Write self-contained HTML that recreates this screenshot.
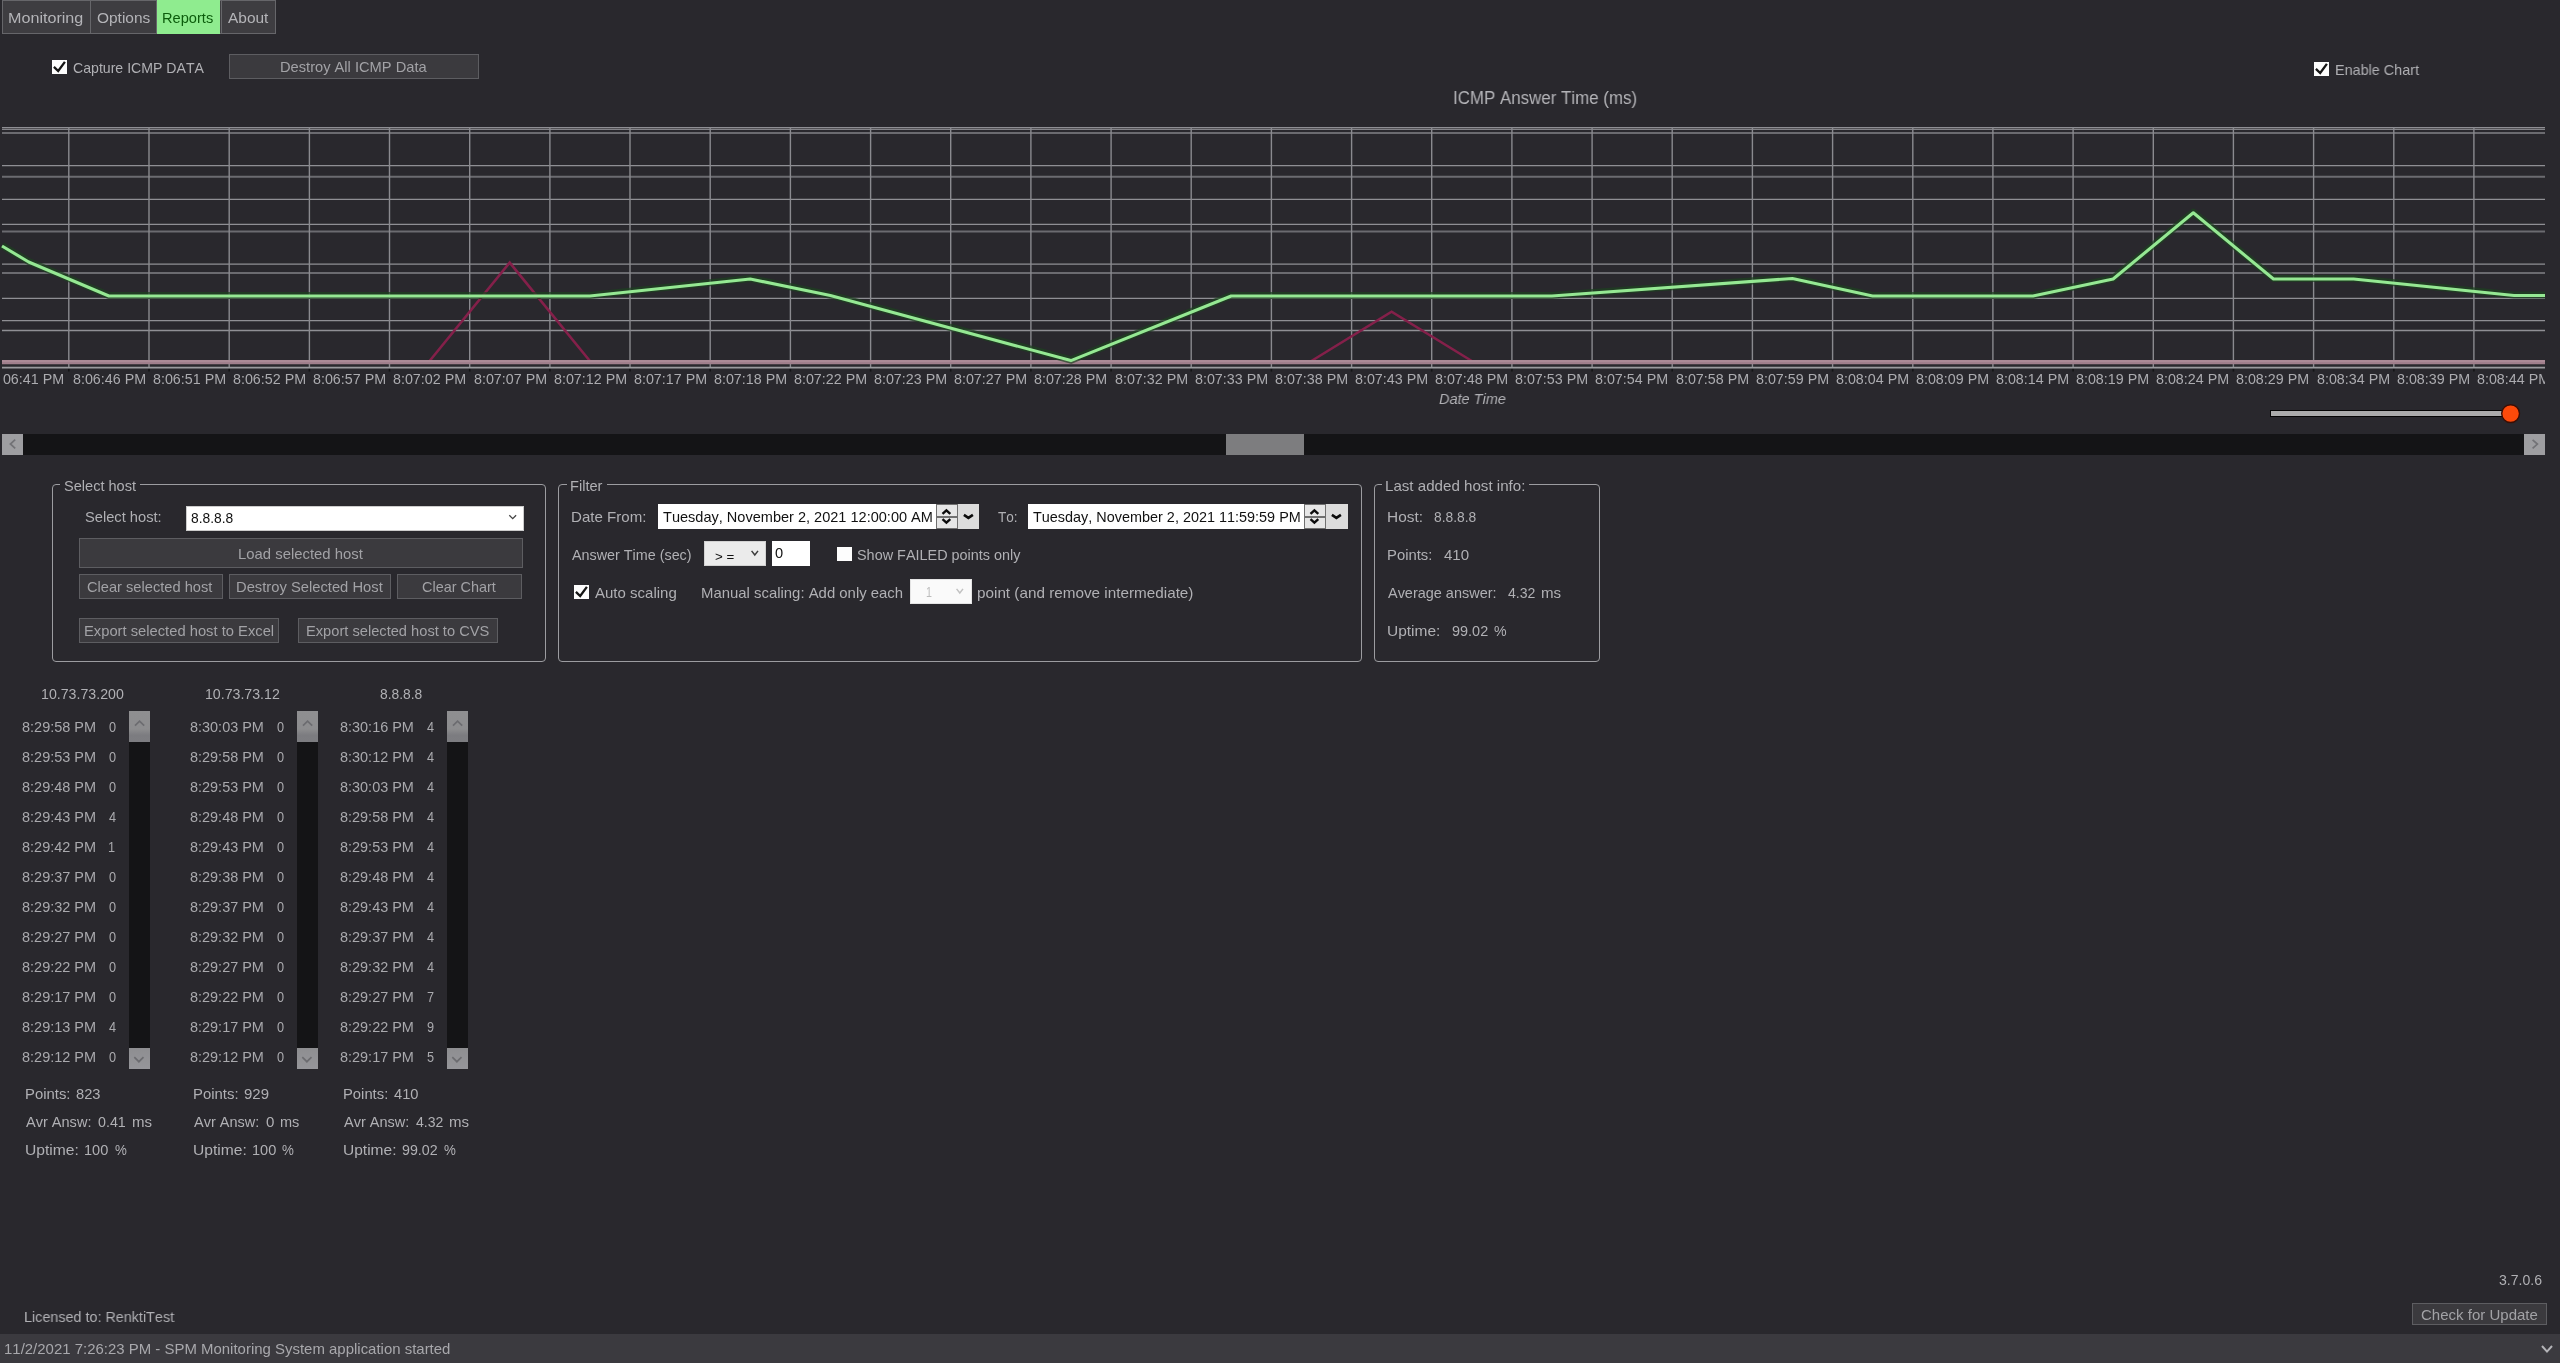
<!DOCTYPE html>
<html><head><meta charset="utf-8"><title>SPM Monitoring System</title>
<style>
html,body{margin:0;padding:0;}
body{width:2560px;height:1363px;overflow:hidden;background:#29282d;font-family:"Liberation Sans",sans-serif;position:relative;}
#w{position:absolute;left:0;top:0;width:2560px;height:1363px;will-change:transform;}
.t{position:absolute;white-space:pre;display:block;transform-origin:0 0;font-kerning:none;font-variant-ligatures:none;}
.r{position:absolute;box-sizing:content-box;}
</style></head><body>
<div id="w">
<div class="r" style="left:2px;top:0px;width:274px;height:34px;background:#3e3d41;border:1px solid #66666a;box-sizing:border-box;"></div>
<div class="r" style="left:89.5px;top:0px;width:1.5px;height:34px;background:#66666a;"></div>
<div class="r" style="left:156px;top:0px;width:1.5px;height:34px;background:#66666a;"></div>
<div class="r" style="left:220.5px;top:0px;width:1.5px;height:34px;background:#66666a;"></div>
<div class="r" style="left:157px;top:0px;width:63.4px;height:33.6px;background:#8fec8f;"></div>
<span class="t" style="left:8.28px;top:7.00px;font-size:14.4px;line-height:22px;color:#b4b4b8;transform:scaleX(1.1209);">Monitoring</span>
<span class="t" style="left:96.57px;top:7.00px;font-size:14.4px;line-height:22px;color:#b4b4b8;transform:scaleX(1.0738);">Options</span>
<span class="t" style="left:162.30px;top:7.00px;font-size:14.4px;line-height:22px;color:#0c5c0c;transform:scaleX(1.0160);">Reports</span>
<span class="t" style="left:228.27px;top:7.00px;font-size:14.4px;line-height:22px;color:#b4b4b8;transform:scaleX(1.0747);">About</span>
<div class="r" style="left:51.7px;top:60px;width:15px;height:14px;background:#fdfdfd;overflow:hidden;"><svg width="14" height="14" viewBox="0 0 14 14" style="position:absolute;left:0;top:0"><path d="M1.9 6.9 L6.2 11 L12.9 1.9" fill="none" stroke="#151515" stroke-width="2.3"/></svg></div>
<span class="t" style="left:72.58px;top:57.00px;font-size:14.6px;line-height:22px;color:#b0b0b4;transform:scaleX(0.9672);">Capture ICMP DATA</span>
<div class="r" style="left:229px;top:54px;width:250px;height:25px;background:#3b3a3e;border:1px solid #5d5d61;box-sizing:border-box;"></div>
<span class="t" style="left:280.30px;top:56.00px;font-size:14.6px;line-height:22px;color:#a2a2a6;transform:scaleX(1.0046);">Destroy All ICMP Data</span>
<div class="r" style="left:2313.7px;top:62px;width:15px;height:14px;background:#fdfdfd;overflow:hidden;"><svg width="14" height="14" viewBox="0 0 14 14" style="position:absolute;left:0;top:0"><path d="M1.9 6.9 L6.2 11 L12.9 1.9" fill="none" stroke="#151515" stroke-width="2.3"/></svg></div>
<span class="t" style="left:2334.92px;top:59.00px;font-size:14.6px;line-height:22px;color:#b0b0b4;transform:scaleX(0.9855);">Enable Chart</span>
<span class="t" style="left:1453.24px;top:84.50px;font-size:18px;line-height:27px;color:#b4b4b8;transform:scaleX(0.9393);">ICMP Answer Time (ms)</span>
<svg class="r" style="left:0;top:120px" width="2560" height="260" viewBox="0 120 2560 260"><g fill="none"><path d="M2 127.6H2545" stroke="#8f8f94" stroke-width="1.3"/><path d="M2 129.45H2545" stroke="#838388" stroke-width="1.2"/><path d="M2 133.05H2545" stroke="#6b6b70" stroke-width="2.0"/><path d="M2 165.6H2545" stroke="#8f8f94" stroke-width="1.3"/><path d="M2 176.8H2545" stroke="#6b6b70" stroke-width="2.0"/><path d="M2 199.4H2545" stroke="#8f8f94" stroke-width="1.3"/><path d="M2 224.3H2545" stroke="#8f8f94" stroke-width="1.3"/><path d="M2 231.6H2545" stroke="#6b6b70" stroke-width="2.0"/><path d="M2 264.2H2545" stroke="#8f8f94" stroke-width="1.3"/><path d="M2 273.0H2545" stroke="#6b6b70" stroke-width="2.0"/><path d="M2 298.3H2545" stroke="#8f8f94" stroke-width="1.3"/><path d="M2 320.6H2545" stroke="#8f8f94" stroke-width="1.3"/><path d="M2 330.5H2545" stroke="#8f8f94" stroke-width="1.3"/></g><g stroke="#8a8a8f" stroke-width="1.4" fill="none"><path d="M68.8 127.2V368"/><path d="M149.0 127.2V368"/><path d="M229.2 127.2V368"/><path d="M309.4 127.2V368"/><path d="M389.5 127.2V368"/><path d="M469.7 127.2V368"/><path d="M549.9 127.2V368"/><path d="M630.0 127.2V368"/><path d="M710.2 127.2V368"/><path d="M790.4 127.2V368"/><path d="M870.6 127.2V368"/><path d="M950.7 127.2V368"/><path d="M1030.9 127.2V368"/><path d="M1111.1 127.2V368"/><path d="M1191.2 127.2V368"/><path d="M1271.4 127.2V368"/><path d="M1351.6 127.2V368"/><path d="M1431.7 127.2V368"/><path d="M1511.9 127.2V368"/><path d="M1592.1 127.2V368"/><path d="M1672.2 127.2V368"/><path d="M1752.4 127.2V368"/><path d="M1832.6 127.2V368"/><path d="M1912.8 127.2V368"/><path d="M1992.9 127.2V368"/><path d="M2073.1 127.2V368"/><path d="M2153.3 127.2V368"/><path d="M2233.4 127.2V368"/><path d="M2313.6 127.2V368"/><path d="M2393.8 127.2V368"/><path d="M2473.9 127.2V368"/></g><g stroke="#141416" stroke-width="1.6" fill="none"><path d="M68.8 368.6V371.6"/><path d="M149.0 368.6V371.6"/><path d="M229.2 368.6V371.6"/><path d="M309.4 368.6V371.6"/><path d="M389.5 368.6V371.6"/><path d="M469.7 368.6V371.6"/><path d="M549.9 368.6V371.6"/><path d="M630.0 368.6V371.6"/><path d="M710.2 368.6V371.6"/><path d="M790.4 368.6V371.6"/><path d="M870.6 368.6V371.6"/><path d="M950.7 368.6V371.6"/><path d="M1030.9 368.6V371.6"/><path d="M1111.1 368.6V371.6"/><path d="M1191.2 368.6V371.6"/><path d="M1271.4 368.6V371.6"/><path d="M1351.6 368.6V371.6"/><path d="M1431.7 368.6V371.6"/><path d="M1511.9 368.6V371.6"/><path d="M1592.1 368.6V371.6"/><path d="M1672.2 368.6V371.6"/><path d="M1752.4 368.6V371.6"/><path d="M1832.6 368.6V371.6"/><path d="M1912.8 368.6V371.6"/><path d="M1992.9 368.6V371.6"/><path d="M2073.1 368.6V371.6"/><path d="M2153.3 368.6V371.6"/><path d="M2233.4 368.6V371.6"/><path d="M2313.6 368.6V371.6"/><path d="M2393.8 368.6V371.6"/><path d="M2473.9 368.6V371.6"/></g><path d="M429.6 361.0 L509.7 262.6 L589.9 361.0" stroke="#84204a" stroke-width="2.6" fill="none" stroke-linejoin="miter"/><path d="M1311.4 361.0 L1391.6 311.7 L1471.8 361.0" stroke="#84204a" stroke-width="2.6" fill="none"/><path d="M2 361H2545" stroke="#ab8a96" stroke-width="2.2" fill="none"/><path d="M2 363.1H2545" stroke="#a07f8c" stroke-width="2.2" fill="none"/><path d="M2 367.6H2545" stroke="#9a9a9e" stroke-width="1.6" fill="none"/><path d="M2.0 246.0 L28.7 262.0 L108.9 296.0 L589.9 296.0 L750.2 279.0 L830.4 295.6 L1070.9 360.6 L1231.2 296.0 L1551.9 296.0 L1792.4 278.5 L1872.6 296.0 L2033.0 296.0 L2113.1 279.0 L2193.3 212.8 L2273.5 279.0 L2353.6 279.0 L2514.0 295.5 L2545.0 295.5" stroke="#1c4220" stroke-opacity="0.7" stroke-width="7.2" fill="none" stroke-linejoin="round" transform="translate(0,-0.5)"/><path d="M2.0 246.0 L28.7 262.0 L108.9 296.0 L589.9 296.0 L750.2 279.0 L830.4 295.6 L1070.9 360.6 L1231.2 296.0 L1551.9 296.0 L1792.4 278.5 L1872.6 296.0 L2033.0 296.0 L2113.1 279.0 L2193.3 212.8 L2273.5 279.0 L2353.6 279.0 L2514.0 295.5 L2545.0 295.5" stroke="#95e893" stroke-width="3.1" fill="none" stroke-linejoin="round"/></svg>
<div class="r" style="left:2.6px;top:369px;width:2542.4px;height:26px;overflow:hidden">
<span class="t" style="left:-11.80px;top:-1.00px;font-size:14.8px;line-height:22px;color:#ababaf;transform:scaleX(0.9657);">8:06:41 PM</span>
<span class="t" style="left:70.33px;top:-1.00px;font-size:14.8px;line-height:22px;color:#ababaf;transform:scaleX(0.9657);">8:06:46 PM</span>
<span class="t" style="left:150.46px;top:-1.00px;font-size:14.8px;line-height:22px;color:#ababaf;transform:scaleX(0.9657);">8:06:51 PM</span>
<span class="t" style="left:230.59px;top:-1.00px;font-size:14.8px;line-height:22px;color:#ababaf;transform:scaleX(0.9657);">8:06:52 PM</span>
<span class="t" style="left:310.72px;top:-1.00px;font-size:14.8px;line-height:22px;color:#ababaf;transform:scaleX(0.9657);">8:06:57 PM</span>
<span class="t" style="left:390.85px;top:-1.00px;font-size:14.8px;line-height:22px;color:#ababaf;transform:scaleX(0.9657);">8:07:02 PM</span>
<span class="t" style="left:470.98px;top:-1.00px;font-size:14.8px;line-height:22px;color:#ababaf;transform:scaleX(0.9657);">8:07:07 PM</span>
<span class="t" style="left:551.11px;top:-1.00px;font-size:14.8px;line-height:22px;color:#ababaf;transform:scaleX(0.9657);">8:07:12 PM</span>
<span class="t" style="left:631.24px;top:-1.00px;font-size:14.8px;line-height:22px;color:#ababaf;transform:scaleX(0.9657);">8:07:17 PM</span>
<span class="t" style="left:711.37px;top:-1.00px;font-size:14.8px;line-height:22px;color:#ababaf;transform:scaleX(0.9657);">8:07:18 PM</span>
<span class="t" style="left:791.50px;top:-1.00px;font-size:14.8px;line-height:22px;color:#ababaf;transform:scaleX(0.9657);">8:07:22 PM</span>
<span class="t" style="left:871.63px;top:-1.00px;font-size:14.8px;line-height:22px;color:#ababaf;transform:scaleX(0.9657);">8:07:23 PM</span>
<span class="t" style="left:951.76px;top:-1.00px;font-size:14.8px;line-height:22px;color:#ababaf;transform:scaleX(0.9657);">8:07:27 PM</span>
<span class="t" style="left:1031.89px;top:-1.00px;font-size:14.8px;line-height:22px;color:#ababaf;transform:scaleX(0.9657);">8:07:28 PM</span>
<span class="t" style="left:1112.02px;top:-1.00px;font-size:14.8px;line-height:22px;color:#ababaf;transform:scaleX(0.9657);">8:07:32 PM</span>
<span class="t" style="left:1192.15px;top:-1.00px;font-size:14.8px;line-height:22px;color:#ababaf;transform:scaleX(0.9657);">8:07:33 PM</span>
<span class="t" style="left:1272.28px;top:-1.00px;font-size:14.8px;line-height:22px;color:#ababaf;transform:scaleX(0.9657);">8:07:38 PM</span>
<span class="t" style="left:1352.41px;top:-1.00px;font-size:14.8px;line-height:22px;color:#ababaf;transform:scaleX(0.9657);">8:07:43 PM</span>
<span class="t" style="left:1432.54px;top:-1.00px;font-size:14.8px;line-height:22px;color:#ababaf;transform:scaleX(0.9657);">8:07:48 PM</span>
<span class="t" style="left:1512.67px;top:-1.00px;font-size:14.8px;line-height:22px;color:#ababaf;transform:scaleX(0.9657);">8:07:53 PM</span>
<span class="t" style="left:1592.80px;top:-1.00px;font-size:14.8px;line-height:22px;color:#ababaf;transform:scaleX(0.9657);">8:07:54 PM</span>
<span class="t" style="left:1672.93px;top:-1.00px;font-size:14.8px;line-height:22px;color:#ababaf;transform:scaleX(0.9657);">8:07:58 PM</span>
<span class="t" style="left:1753.06px;top:-1.00px;font-size:14.8px;line-height:22px;color:#ababaf;transform:scaleX(0.9657);">8:07:59 PM</span>
<span class="t" style="left:1833.19px;top:-1.00px;font-size:14.8px;line-height:22px;color:#ababaf;transform:scaleX(0.9657);">8:08:04 PM</span>
<span class="t" style="left:1913.32px;top:-1.00px;font-size:14.8px;line-height:22px;color:#ababaf;transform:scaleX(0.9657);">8:08:09 PM</span>
<span class="t" style="left:1993.45px;top:-1.00px;font-size:14.8px;line-height:22px;color:#ababaf;transform:scaleX(0.9657);">8:08:14 PM</span>
<span class="t" style="left:2073.58px;top:-1.00px;font-size:14.8px;line-height:22px;color:#ababaf;transform:scaleX(0.9657);">8:08:19 PM</span>
<span class="t" style="left:2153.71px;top:-1.00px;font-size:14.8px;line-height:22px;color:#ababaf;transform:scaleX(0.9657);">8:08:24 PM</span>
<span class="t" style="left:2233.84px;top:-1.00px;font-size:14.8px;line-height:22px;color:#ababaf;transform:scaleX(0.9657);">8:08:29 PM</span>
<span class="t" style="left:2313.97px;top:-1.00px;font-size:14.8px;line-height:22px;color:#ababaf;transform:scaleX(0.9657);">8:08:34 PM</span>
<span class="t" style="left:2394.10px;top:-1.00px;font-size:14.8px;line-height:22px;color:#ababaf;transform:scaleX(0.9657);">8:08:39 PM</span>
<span class="t" style="left:2474.23px;top:-1.00px;font-size:14.8px;line-height:22px;color:#ababaf;transform:scaleX(0.9657);">8:08:44 PM</span>
</div>
<span class="t" style="left:1438.55px;top:387.00px;font-size:15.5px;line-height:23px;color:#b0b0b4;transform:scaleX(0.9370);font-style:italic;">Date Time</span>
<div class="r" style="left:2270px;top:410px;width:236px;height:7px;background:#ababab;border:1px solid #050505;box-sizing:border-box;"></div>
<svg class="r" style="left:2498px;top:401px" width="26" height="26"><circle cx="12.6" cy="12.6" r="8.9" fill="#fd4a0a" stroke="#3a0e05" stroke-width="1.4"/></svg>
<div class="r" style="left:2px;top:434px;width:2543px;height:21px;background:#141416;"></div>
<div class="r" style="left:2px;top:434px;width:21px;height:21px;background:#9e9ea1;"><svg width="21" height="21" style="position:absolute;left:0;top:0"><path d="M13.2 5.7L8.4 10L13.2 14.3" stroke="#727276" stroke-width="1.7" fill="none"/></svg></div>
<div class="r" style="left:2524px;top:434px;width:21px;height:21px;background:#9e9ea1;"><svg width="21" height="21" style="position:absolute;left:0;top:0"><path d="M8.6 5.8L13.4 10.1L8.6 14.4" stroke="#727276" stroke-width="1.7" fill="none"/></svg></div>
<div class="r" style="left:1226px;top:434px;width:78px;height:21px;background:#7d7d7f;"></div>
<div class="r" style="left:52px;top:484px;width:494px;height:178px;border:1px solid #9c9ca0;border-radius:4px;box-sizing:border-box;"></div>
<div class="r" style="left:60.2px;top:482px;width:80.3px;height:5px;background:#29282d;"></div>
<span class="t" style="left:63.54px;top:475.00px;font-size:14.6px;line-height:22px;color:#b0b0b4;transform:scaleX(0.9978);">Select host</span>
<div class="r" style="left:558px;top:484px;width:804px;height:178px;border:1px solid #9c9ca0;border-radius:4px;box-sizing:border-box;"></div>
<div class="r" style="left:566.7px;top:482px;width:40.0px;height:5px;background:#29282d;"></div>
<span class="t" style="left:569.50px;top:475.00px;font-size:14.6px;line-height:22px;color:#b0b0b4;transform:scaleX(0.9999);">Filter</span>
<div class="r" style="left:1374px;top:484px;width:226px;height:178px;border:1px solid #9c9ca0;border-radius:4px;box-sizing:border-box;"></div>
<div class="r" style="left:1382.3px;top:482px;width:146.79999999999995px;height:5px;background:#29282d;"></div>
<span class="t" style="left:1385.06px;top:475.00px;font-size:14.6px;line-height:22px;color:#b0b0b4;transform:scaleX(1.0359);">Last added host info:</span>
<span class="t" style="left:84.63px;top:506.00px;font-size:14.6px;line-height:22px;color:#b0b0b4;transform:scaleX(1.0055);">Select host:</span>
<div class="r" style="left:186px;top:506px;width:338px;height:24.5px;background:#fff;border:1px solid #ccc;box-sizing:border-box;"></div>
<span class="t" style="left:190.80px;top:507.00px;font-size:14.6px;line-height:22px;color:#111;transform:scaleX(0.9475);">8.8.8.8</span>
<svg class="r" style="left:507px;top:512px" width="12" height="10"><path d="M2.3 3.2L5.7 6.6L9.1 3.2" stroke="#444" stroke-width="1.3" fill="none"/></svg>
<div class="r" style="left:79px;top:538px;width:444px;height:30px;background:#3b3a3e;border:1px solid #5d5d61;box-sizing:border-box;"></div>
<span class="t" style="left:237.78px;top:543.00px;font-size:14.6px;line-height:22px;color:#a2a2a6;transform:scaleX(1.0185);">Load selected host</span>
<div class="r" style="left:79px;top:574px;width:144px;height:25px;background:#3b3a3e;border:1px solid #5d5d61;box-sizing:border-box;"></div>
<span class="t" style="left:87.26px;top:576.00px;font-size:14.6px;line-height:22px;color:#a2a2a6;transform:scaleX(1.0030);">Clear selected host</span>
<div class="r" style="left:229px;top:574px;width:162px;height:25px;background:#3b3a3e;border:1px solid #5d5d61;box-sizing:border-box;"></div>
<span class="t" style="left:236.29px;top:576.00px;font-size:14.6px;line-height:22px;color:#a2a2a6;transform:scaleX(1.0108);">Destroy Selected Host</span>
<div class="r" style="left:397px;top:574px;width:125px;height:25px;background:#3b3a3e;border:1px solid #5d5d61;box-sizing:border-box;"></div>
<span class="t" style="left:422.27px;top:576.00px;font-size:14.6px;line-height:22px;color:#a2a2a6;transform:scaleX(0.9892);">Clear Chart</span>
<div class="r" style="left:79px;top:618px;width:200px;height:25px;background:#3b3a3e;border:1px solid #5d5d61;box-sizing:border-box;"></div>
<span class="t" style="left:84.29px;top:620.00px;font-size:14.6px;line-height:22px;color:#a2a2a6;transform:scaleX(1.0102);">Export selected host to Excel</span>
<div class="r" style="left:298px;top:618px;width:200px;height:25px;background:#3b3a3e;border:1px solid #5d5d61;box-sizing:border-box;"></div>
<span class="t" style="left:306.30px;top:620.00px;font-size:14.6px;line-height:22px;color:#a2a2a6;transform:scaleX(1.0043);">Export selected host to CVS</span>
<span class="t" style="left:570.96px;top:506.00px;font-size:14.6px;line-height:22px;color:#b0b0b4;transform:scaleX(1.0329);">Date From:</span>
<span class="t" style="left:997.79px;top:506.00px;font-size:14.6px;line-height:22px;color:#b0b0b4;transform:scaleX(0.9314);">To:</span>
<div class="r" style="left:658px;top:504px;width:321.3px;height:24.5px;background:#fff;"></div>
<span class="t" style="left:662.57px;top:506.00px;font-size:14.6px;line-height:22px;color:#111;transform:scaleX(0.9961);">Tuesday, November 2, 2021 12:00:00 AM</span>
<div class="r" style="left:936.0px;top:504px;width:21.8px;height:24.5px;background:#e6e6e6;border:1px solid #707070;box-sizing:border-box;"></div>
<div class="r" style="left:936.0px;top:516.4px;width:21.8px;height:1.2px;background:#707070;"></div>
<svg class="r" style="left:936.0px;top:504px" width="22" height="25"><path d="M6.5 9.9L10.4 6.4L14.3 9.9" stroke="#0c0c0c" stroke-width="2.4" fill="none"/><path d="M6.5 15.2L10.4 18.7L14.3 15.2" stroke="#0c0c0c" stroke-width="2.4" fill="none"/></svg>
<div class="r" style="left:957.8px;top:504px;width:21.5px;height:24.5px;background:#dcdcdc;"></div>
<svg class="r" style="left:957.8px;top:504px" width="22" height="25"><path d="M5.9 10.9L10.4 13.9L14.9 10.9" stroke="#0c0c0c" stroke-width="2.6" fill="none"/></svg>
<div class="r" style="left:1028px;top:504px;width:319.5px;height:24.5px;background:#fff;"></div>
<span class="t" style="left:1032.68px;top:506.00px;font-size:14.6px;line-height:22px;color:#111;transform:scaleX(0.9883);">Tuesday, November 2, 2021 11:59:59 PM</span>
<div class="r" style="left:1304.2px;top:504px;width:21.8px;height:24.5px;background:#e6e6e6;border:1px solid #707070;box-sizing:border-box;"></div>
<div class="r" style="left:1304.2px;top:516.4px;width:21.8px;height:1.2px;background:#707070;"></div>
<svg class="r" style="left:1304.2px;top:504px" width="22" height="25"><path d="M6.5 9.9L10.4 6.4L14.3 9.9" stroke="#0c0c0c" stroke-width="2.4" fill="none"/><path d="M6.5 15.2L10.4 18.7L14.3 15.2" stroke="#0c0c0c" stroke-width="2.4" fill="none"/></svg>
<div class="r" style="left:1326.0px;top:504px;width:21.5px;height:24.5px;background:#dcdcdc;"></div>
<svg class="r" style="left:1326.0px;top:504px" width="22" height="25"><path d="M5.9 10.9L10.4 13.9L14.9 10.9" stroke="#0c0c0c" stroke-width="2.6" fill="none"/></svg>
<span class="t" style="left:572.17px;top:544.00px;font-size:14.6px;line-height:22px;color:#b0b0b4;transform:scaleX(0.9830);">Answer Time (sec)</span>
<div class="r" style="left:704px;top:541px;width:62px;height:25px;background:#ebebeb;border:1px solid #d2d2d2;box-sizing:border-box;"></div>
<span class="t" style="left:714.94px;top:547.50px;font-size:12.5px;line-height:19px;color:#111;transform:scaleX(1.0630);">&gt; =</span>
<svg class="r" style="left:748px;top:546px" width="14" height="12"><path d="M3.6 4.9L6.8 9L10 4.9" stroke="#3c3c3c" stroke-width="1.5" fill="none"/></svg>
<div class="r" style="left:772px;top:541px;width:38px;height:25px;background:#fff;"></div>
<span class="t" style="left:774.93px;top:542.00px;font-size:14.6px;line-height:22px;color:#111;transform:scaleX(1.0030);">0</span>
<div class="r" style="left:836.7px;top:547px;width:15px;height:14px;background:#fdfdfd;overflow:hidden;"></div>
<span class="t" style="left:857.34px;top:544.00px;font-size:14.6px;line-height:22px;color:#b0b0b4;transform:scaleX(0.9881);">Show FAILED points only</span>
<div class="r" style="left:573.7px;top:585px;width:15px;height:14px;background:#fdfdfd;overflow:hidden;"><svg width="14" height="14" viewBox="0 0 14 14" style="position:absolute;left:0;top:0"><path d="M1.9 6.9 L6.2 11 L12.9 1.9" fill="none" stroke="#151515" stroke-width="2.3"/></svg></div>
<span class="t" style="left:595.37px;top:582.00px;font-size:14.6px;line-height:22px;color:#b0b0b4;transform:scaleX(1.0284);">Auto scaling</span>
<span class="t" style="left:701.08px;top:582.00px;font-size:14.6px;line-height:22px;color:#b0b0b4;transform:scaleX(1.0210);">Manual scaling: Add only each</span>
<div class="r" style="left:910px;top:579px;width:62px;height:25px;background:#fafafa;border:1px solid #e4e4e4;box-sizing:border-box;"></div>
<span class="t" style="left:925.79px;top:581.00px;font-size:14.6px;line-height:22px;color:#bcbcbc;transform:scaleX(0.7308);">1</span>
<svg class="r" style="left:953px;top:584px" width="14" height="12"><path d="M3.6 4.9L6.8 9L10 4.9" stroke="#c2c2c2" stroke-width="1.5" fill="none"/></svg>
<span class="t" style="left:977.32px;top:582.00px;font-size:14.6px;line-height:22px;color:#b0b0b4;transform:scaleX(1.0464);">point (and remove intermediate)</span>
<span class="t" style="left:1387.14px;top:506.00px;font-size:14.6px;line-height:22px;color:#b0b0b4;transform:scaleX(1.0556);">Host:</span>
<span class="t" style="left:1433.80px;top:506.00px;font-size:14.6px;line-height:22px;color:#b0b0b4;transform:scaleX(0.9475);">8.8.8.8</span>
<span class="t" style="left:1387.18px;top:544.00px;font-size:14.6px;line-height:22px;color:#b0b0b4;transform:scaleX(1.0165);">Points:</span>
<span class="t" style="left:1443.55px;top:544.00px;font-size:14.6px;line-height:22px;color:#b0b0b4;transform:scaleX(1.0318);">410</span>
<span class="t" style="left:1388.37px;top:582.00px;font-size:14.6px;line-height:22px;color:#b0b0b4;transform:scaleX(0.9908);">Average answer:</span>
<span class="t" style="left:1507.88px;top:582.00px;font-size:14.6px;line-height:22px;color:#b0b0b4;transform:scaleX(0.9654);">4.32</span>
<span class="t" style="left:1541.40px;top:582.00px;font-size:14.6px;line-height:22px;color:#b0b0b4;transform:scaleX(1.0354);">ms</span>
<span class="t" style="left:1387.20px;top:620.00px;font-size:14.6px;line-height:22px;color:#b0b0b4;transform:scaleX(1.0618);">Uptime:</span>
<span class="t" style="left:1451.62px;top:620.00px;font-size:14.6px;line-height:22px;color:#b0b0b4;transform:scaleX(0.9910);">99.02</span>
<span class="t" style="left:1493.99px;top:620.00px;font-size:14.6px;line-height:22px;color:#b0b0b4;transform:scaleX(0.9714);">%</span>
<span class="t" style="left:41.02px;top:683.00px;font-size:14.6px;line-height:22px;color:#b0b0b4;transform:scaleX(0.9717);">10.73.73.200</span>
<span class="t" style="left:204.92px;top:683.00px;font-size:14.6px;line-height:22px;color:#b0b0b4;transform:scaleX(0.9697);">10.73.73.12</span>
<span class="t" style="left:379.80px;top:683.00px;font-size:14.6px;line-height:22px;color:#b0b0b4;transform:scaleX(0.9475);">8.8.8.8</span>
<span class="t" style="left:21.57px;top:716.00px;font-size:14.6px;line-height:22px;color:#a9a9ad;transform:scaleX(0.9926);">8:29:58 PM</span>
<span class="t" style="left:108.67px;top:716.00px;font-size:14.6px;line-height:22px;color:#a9a9ad;transform:scaleX(0.8700);">0</span>
<span class="t" style="left:21.57px;top:746.00px;font-size:14.6px;line-height:22px;color:#a9a9ad;transform:scaleX(0.9926);">8:29:53 PM</span>
<span class="t" style="left:108.67px;top:746.00px;font-size:14.6px;line-height:22px;color:#a9a9ad;transform:scaleX(0.8700);">0</span>
<span class="t" style="left:21.57px;top:776.00px;font-size:14.6px;line-height:22px;color:#a9a9ad;transform:scaleX(0.9926);">8:29:48 PM</span>
<span class="t" style="left:108.67px;top:776.00px;font-size:14.6px;line-height:22px;color:#a9a9ad;transform:scaleX(0.8700);">0</span>
<span class="t" style="left:21.57px;top:806.00px;font-size:14.6px;line-height:22px;color:#a9a9ad;transform:scaleX(0.9926);">8:29:43 PM</span>
<span class="t" style="left:108.71px;top:806.00px;font-size:14.6px;line-height:22px;color:#a9a9ad;transform:scaleX(0.8700);">4</span>
<span class="t" style="left:21.57px;top:836.00px;font-size:14.6px;line-height:22px;color:#a9a9ad;transform:scaleX(0.9926);">8:29:42 PM</span>
<span class="t" style="left:108.49px;top:836.00px;font-size:14.6px;line-height:22px;color:#a9a9ad;transform:scaleX(0.8700);">1</span>
<span class="t" style="left:21.57px;top:866.00px;font-size:14.6px;line-height:22px;color:#a9a9ad;transform:scaleX(0.9926);">8:29:37 PM</span>
<span class="t" style="left:108.67px;top:866.00px;font-size:14.6px;line-height:22px;color:#a9a9ad;transform:scaleX(0.8700);">0</span>
<span class="t" style="left:21.57px;top:896.00px;font-size:14.6px;line-height:22px;color:#a9a9ad;transform:scaleX(0.9926);">8:29:32 PM</span>
<span class="t" style="left:108.67px;top:896.00px;font-size:14.6px;line-height:22px;color:#a9a9ad;transform:scaleX(0.8700);">0</span>
<span class="t" style="left:21.57px;top:926.00px;font-size:14.6px;line-height:22px;color:#a9a9ad;transform:scaleX(0.9926);">8:29:27 PM</span>
<span class="t" style="left:108.67px;top:926.00px;font-size:14.6px;line-height:22px;color:#a9a9ad;transform:scaleX(0.8700);">0</span>
<span class="t" style="left:21.57px;top:956.00px;font-size:14.6px;line-height:22px;color:#a9a9ad;transform:scaleX(0.9926);">8:29:22 PM</span>
<span class="t" style="left:108.67px;top:956.00px;font-size:14.6px;line-height:22px;color:#a9a9ad;transform:scaleX(0.8700);">0</span>
<span class="t" style="left:21.57px;top:986.00px;font-size:14.6px;line-height:22px;color:#a9a9ad;transform:scaleX(0.9926);">8:29:17 PM</span>
<span class="t" style="left:108.67px;top:986.00px;font-size:14.6px;line-height:22px;color:#a9a9ad;transform:scaleX(0.8700);">0</span>
<span class="t" style="left:21.57px;top:1016.00px;font-size:14.6px;line-height:22px;color:#a9a9ad;transform:scaleX(0.9926);">8:29:13 PM</span>
<span class="t" style="left:108.71px;top:1016.00px;font-size:14.6px;line-height:22px;color:#a9a9ad;transform:scaleX(0.8700);">4</span>
<span class="t" style="left:21.57px;top:1046.00px;font-size:14.6px;line-height:22px;color:#a9a9ad;transform:scaleX(0.9926);">8:29:12 PM</span>
<span class="t" style="left:108.67px;top:1046.00px;font-size:14.6px;line-height:22px;color:#a9a9ad;transform:scaleX(0.8700);">0</span>
<div class="r" style="left:129px;top:711px;width:21px;height:358px;background:#141416;"></div>
<div class="r" style="left:129px;top:711px;width:21px;height:31px;background:linear-gradient(#8f8f91,#8d8d8f 58%,#7c7c80 78%,#7d7d81);"><svg width="21" height="31" style="position:absolute;left:0;top:0"><path d="M6 14.7L10.6 10.2L15.2 14.7" stroke="#6c6c70" stroke-width="1.7" fill="none"/></svg></div>
<div class="r" style="left:129px;top:1048px;width:21px;height:21px;background:linear-gradient(#8e8e91,#96969a);"><svg width="21" height="21" style="position:absolute;left:0;top:0"><path d="M5.3 9.2L9.9 13.7L14.5 9.2" stroke="#6c6c70" stroke-width="1.7" fill="none"/></svg></div>
<span class="t" style="left:189.77px;top:716.00px;font-size:14.6px;line-height:22px;color:#a9a9ad;transform:scaleX(0.9899);">8:30:03 PM</span>
<span class="t" style="left:276.67px;top:716.00px;font-size:14.6px;line-height:22px;color:#a9a9ad;transform:scaleX(0.8700);">0</span>
<span class="t" style="left:189.77px;top:746.00px;font-size:14.6px;line-height:22px;color:#a9a9ad;transform:scaleX(0.9899);">8:29:58 PM</span>
<span class="t" style="left:276.67px;top:746.00px;font-size:14.6px;line-height:22px;color:#a9a9ad;transform:scaleX(0.8700);">0</span>
<span class="t" style="left:189.77px;top:776.00px;font-size:14.6px;line-height:22px;color:#a9a9ad;transform:scaleX(0.9899);">8:29:53 PM</span>
<span class="t" style="left:276.67px;top:776.00px;font-size:14.6px;line-height:22px;color:#a9a9ad;transform:scaleX(0.8700);">0</span>
<span class="t" style="left:189.77px;top:806.00px;font-size:14.6px;line-height:22px;color:#a9a9ad;transform:scaleX(0.9899);">8:29:48 PM</span>
<span class="t" style="left:276.67px;top:806.00px;font-size:14.6px;line-height:22px;color:#a9a9ad;transform:scaleX(0.8700);">0</span>
<span class="t" style="left:189.77px;top:836.00px;font-size:14.6px;line-height:22px;color:#a9a9ad;transform:scaleX(0.9899);">8:29:43 PM</span>
<span class="t" style="left:276.67px;top:836.00px;font-size:14.6px;line-height:22px;color:#a9a9ad;transform:scaleX(0.8700);">0</span>
<span class="t" style="left:189.77px;top:866.00px;font-size:14.6px;line-height:22px;color:#a9a9ad;transform:scaleX(0.9899);">8:29:38 PM</span>
<span class="t" style="left:276.67px;top:866.00px;font-size:14.6px;line-height:22px;color:#a9a9ad;transform:scaleX(0.8700);">0</span>
<span class="t" style="left:189.77px;top:896.00px;font-size:14.6px;line-height:22px;color:#a9a9ad;transform:scaleX(0.9899);">8:29:37 PM</span>
<span class="t" style="left:276.67px;top:896.00px;font-size:14.6px;line-height:22px;color:#a9a9ad;transform:scaleX(0.8700);">0</span>
<span class="t" style="left:189.77px;top:926.00px;font-size:14.6px;line-height:22px;color:#a9a9ad;transform:scaleX(0.9899);">8:29:32 PM</span>
<span class="t" style="left:276.67px;top:926.00px;font-size:14.6px;line-height:22px;color:#a9a9ad;transform:scaleX(0.8700);">0</span>
<span class="t" style="left:189.77px;top:956.00px;font-size:14.6px;line-height:22px;color:#a9a9ad;transform:scaleX(0.9899);">8:29:27 PM</span>
<span class="t" style="left:276.67px;top:956.00px;font-size:14.6px;line-height:22px;color:#a9a9ad;transform:scaleX(0.8700);">0</span>
<span class="t" style="left:189.77px;top:986.00px;font-size:14.6px;line-height:22px;color:#a9a9ad;transform:scaleX(0.9899);">8:29:22 PM</span>
<span class="t" style="left:276.67px;top:986.00px;font-size:14.6px;line-height:22px;color:#a9a9ad;transform:scaleX(0.8700);">0</span>
<span class="t" style="left:189.77px;top:1016.00px;font-size:14.6px;line-height:22px;color:#a9a9ad;transform:scaleX(0.9899);">8:29:17 PM</span>
<span class="t" style="left:276.67px;top:1016.00px;font-size:14.6px;line-height:22px;color:#a9a9ad;transform:scaleX(0.8700);">0</span>
<span class="t" style="left:189.77px;top:1046.00px;font-size:14.6px;line-height:22px;color:#a9a9ad;transform:scaleX(0.9899);">8:29:12 PM</span>
<span class="t" style="left:276.67px;top:1046.00px;font-size:14.6px;line-height:22px;color:#a9a9ad;transform:scaleX(0.8700);">0</span>
<div class="r" style="left:297px;top:711px;width:21px;height:358px;background:#141416;"></div>
<div class="r" style="left:297px;top:711px;width:21px;height:31px;background:linear-gradient(#8f8f91,#8d8d8f 58%,#7c7c80 78%,#7d7d81);"><svg width="21" height="31" style="position:absolute;left:0;top:0"><path d="M6 14.7L10.6 10.2L15.2 14.7" stroke="#6c6c70" stroke-width="1.7" fill="none"/></svg></div>
<div class="r" style="left:297px;top:1048px;width:21px;height:21px;background:linear-gradient(#8e8e91,#96969a);"><svg width="21" height="21" style="position:absolute;left:0;top:0"><path d="M5.3 9.2L9.9 13.7L14.5 9.2" stroke="#6c6c70" stroke-width="1.7" fill="none"/></svg></div>
<span class="t" style="left:339.77px;top:716.00px;font-size:14.6px;line-height:22px;color:#a9a9ad;transform:scaleX(0.9899);">8:30:16 PM</span>
<span class="t" style="left:426.61px;top:716.00px;font-size:14.6px;line-height:22px;color:#a9a9ad;transform:scaleX(0.8700);">4</span>
<span class="t" style="left:339.77px;top:746.00px;font-size:14.6px;line-height:22px;color:#a9a9ad;transform:scaleX(0.9899);">8:30:12 PM</span>
<span class="t" style="left:426.61px;top:746.00px;font-size:14.6px;line-height:22px;color:#a9a9ad;transform:scaleX(0.8700);">4</span>
<span class="t" style="left:339.77px;top:776.00px;font-size:14.6px;line-height:22px;color:#a9a9ad;transform:scaleX(0.9899);">8:30:03 PM</span>
<span class="t" style="left:426.61px;top:776.00px;font-size:14.6px;line-height:22px;color:#a9a9ad;transform:scaleX(0.8700);">4</span>
<span class="t" style="left:339.77px;top:806.00px;font-size:14.6px;line-height:22px;color:#a9a9ad;transform:scaleX(0.9899);">8:29:58 PM</span>
<span class="t" style="left:426.61px;top:806.00px;font-size:14.6px;line-height:22px;color:#a9a9ad;transform:scaleX(0.8700);">4</span>
<span class="t" style="left:339.77px;top:836.00px;font-size:14.6px;line-height:22px;color:#a9a9ad;transform:scaleX(0.9899);">8:29:53 PM</span>
<span class="t" style="left:426.61px;top:836.00px;font-size:14.6px;line-height:22px;color:#a9a9ad;transform:scaleX(0.8700);">4</span>
<span class="t" style="left:339.77px;top:866.00px;font-size:14.6px;line-height:22px;color:#a9a9ad;transform:scaleX(0.9899);">8:29:48 PM</span>
<span class="t" style="left:426.61px;top:866.00px;font-size:14.6px;line-height:22px;color:#a9a9ad;transform:scaleX(0.8700);">4</span>
<span class="t" style="left:339.77px;top:896.00px;font-size:14.6px;line-height:22px;color:#a9a9ad;transform:scaleX(0.9899);">8:29:43 PM</span>
<span class="t" style="left:426.61px;top:896.00px;font-size:14.6px;line-height:22px;color:#a9a9ad;transform:scaleX(0.8700);">4</span>
<span class="t" style="left:339.77px;top:926.00px;font-size:14.6px;line-height:22px;color:#a9a9ad;transform:scaleX(0.9899);">8:29:37 PM</span>
<span class="t" style="left:426.61px;top:926.00px;font-size:14.6px;line-height:22px;color:#a9a9ad;transform:scaleX(0.8700);">4</span>
<span class="t" style="left:339.77px;top:956.00px;font-size:14.6px;line-height:22px;color:#a9a9ad;transform:scaleX(0.9899);">8:29:32 PM</span>
<span class="t" style="left:426.61px;top:956.00px;font-size:14.6px;line-height:22px;color:#a9a9ad;transform:scaleX(0.8700);">4</span>
<span class="t" style="left:339.77px;top:986.00px;font-size:14.6px;line-height:22px;color:#a9a9ad;transform:scaleX(0.9899);">8:29:27 PM</span>
<span class="t" style="left:426.56px;top:986.00px;font-size:14.6px;line-height:22px;color:#a9a9ad;transform:scaleX(0.8700);">7</span>
<span class="t" style="left:339.77px;top:1016.00px;font-size:14.6px;line-height:22px;color:#a9a9ad;transform:scaleX(0.9899);">8:29:22 PM</span>
<span class="t" style="left:426.57px;top:1016.00px;font-size:14.6px;line-height:22px;color:#a9a9ad;transform:scaleX(0.8700);">9</span>
<span class="t" style="left:339.77px;top:1046.00px;font-size:14.6px;line-height:22px;color:#a9a9ad;transform:scaleX(0.9899);">8:29:17 PM</span>
<span class="t" style="left:426.58px;top:1046.00px;font-size:14.6px;line-height:22px;color:#a9a9ad;transform:scaleX(0.8700);">5</span>
<div class="r" style="left:447.2px;top:711px;width:21px;height:358px;background:#141416;"></div>
<div class="r" style="left:447.2px;top:711px;width:21px;height:31px;background:linear-gradient(#8f8f91,#8d8d8f 58%,#7c7c80 78%,#7d7d81);"><svg width="21" height="31" style="position:absolute;left:0;top:0"><path d="M6 14.7L10.6 10.2L15.2 14.7" stroke="#6c6c70" stroke-width="1.7" fill="none"/></svg></div>
<div class="r" style="left:447.2px;top:1048px;width:21px;height:21px;background:linear-gradient(#8e8e91,#96969a);"><svg width="21" height="21" style="position:absolute;left:0;top:0"><path d="M5.3 9.2L9.9 13.7L14.5 9.2" stroke="#6c6c70" stroke-width="1.7" fill="none"/></svg></div>
<span class="t" style="left:25.08px;top:1083.00px;font-size:14.6px;line-height:22px;color:#b0b0b4;transform:scaleX(1.0189);">Points:</span>
<span class="t" style="left:75.76px;top:1083.00px;font-size:14.6px;line-height:22px;color:#b0b0b4;transform:scaleX(1.0051);">823</span>
<span class="t" style="left:26.27px;top:1111.00px;font-size:14.6px;line-height:22px;color:#b0b0b4;transform:scaleX(0.9961);">Avr Answ:</span>
<span class="t" style="left:97.64px;top:1111.00px;font-size:14.6px;line-height:22px;color:#b0b0b4;transform:scaleX(0.9767);">0.41</span>
<span class="t" style="left:131.50px;top:1111.00px;font-size:14.6px;line-height:22px;color:#b0b0b4;transform:scaleX(1.0298);">ms</span>
<span class="t" style="left:25.09px;top:1139.00px;font-size:14.6px;line-height:22px;color:#b0b0b4;transform:scaleX(1.0723);">Uptime:</span>
<span class="t" style="left:84.09px;top:1139.00px;font-size:14.6px;line-height:22px;color:#b0b0b4;transform:scaleX(0.9966);">100</span>
<span class="t" style="left:114.52px;top:1139.00px;font-size:14.6px;line-height:22px;color:#b0b0b4;transform:scaleX(0.9128);">%</span>
<span class="t" style="left:193.08px;top:1083.00px;font-size:14.6px;line-height:22px;color:#b0b0b4;transform:scaleX(1.0213);">Points:</span>
<span class="t" style="left:243.80px;top:1083.00px;font-size:14.6px;line-height:22px;color:#b0b0b4;transform:scaleX(1.0268);">929</span>
<span class="t" style="left:194.27px;top:1111.00px;font-size:14.6px;line-height:22px;color:#b0b0b4;transform:scaleX(0.9930);">Avr Answ:</span>
<span class="t" style="left:266.01px;top:1111.00px;font-size:14.6px;line-height:22px;color:#b0b0b4;transform:scaleX(1.0316);">0</span>
<span class="t" style="left:280.03px;top:1111.00px;font-size:14.6px;line-height:22px;color:#b0b0b4;transform:scaleX(0.9964);">ms</span>
<span class="t" style="left:193.09px;top:1139.00px;font-size:14.6px;line-height:22px;color:#b0b0b4;transform:scaleX(1.0702);">Uptime:</span>
<span class="t" style="left:251.99px;top:1139.00px;font-size:14.6px;line-height:22px;color:#b0b0b4;transform:scaleX(0.9966);">100</span>
<span class="t" style="left:282.42px;top:1139.00px;font-size:14.6px;line-height:22px;color:#b0b0b4;transform:scaleX(0.9128);">%</span>
<span class="t" style="left:343.29px;top:1083.00px;font-size:14.6px;line-height:22px;color:#b0b0b4;transform:scaleX(1.0142);">Points:</span>
<span class="t" style="left:394.06px;top:1083.00px;font-size:14.6px;line-height:22px;color:#b0b0b4;transform:scaleX(1.0062);">410</span>
<span class="t" style="left:344.47px;top:1111.00px;font-size:14.6px;line-height:22px;color:#b0b0b4;transform:scaleX(0.9930);">Avr Answ:</span>
<span class="t" style="left:416.08px;top:1111.00px;font-size:14.6px;line-height:22px;color:#b0b0b4;transform:scaleX(0.9617);">4.32</span>
<span class="t" style="left:449.30px;top:1111.00px;font-size:14.6px;line-height:22px;color:#b0b0b4;transform:scaleX(1.0298);">ms</span>
<span class="t" style="left:343.30px;top:1139.00px;font-size:14.6px;line-height:22px;color:#b0b0b4;transform:scaleX(1.0639);">Uptime:</span>
<span class="t" style="left:401.53px;top:1139.00px;font-size:14.6px;line-height:22px;color:#b0b0b4;transform:scaleX(0.9767);">99.02</span>
<span class="t" style="left:444.22px;top:1139.00px;font-size:14.6px;line-height:22px;color:#b0b0b4;transform:scaleX(0.9128);">%</span>
<span class="t" style="left:23.82px;top:1306.00px;font-size:14.6px;line-height:22px;color:#b0b0b4;transform:scaleX(0.9837);">Licensed to: RenktiTest</span>
<span class="t" style="left:2498.86px;top:1269.00px;font-size:14.6px;line-height:22px;color:#b0b0b4;transform:scaleX(0.9643);">3.7.0.6</span>
<div class="r" style="left:2412px;top:1303px;width:135px;height:22px;background:#3b3a3e;border:1px solid #5d5d61;box-sizing:border-box;"></div>
<span class="t" style="left:2421.24px;top:1304.00px;font-size:14.6px;line-height:22px;color:#a2a2a6;transform:scaleX(1.0292);">Check for Update</span>
<div class="r" style="left:0px;top:1334px;width:2560px;height:29px;background:#3b3a3f;"></div>
<span class="t" style="left:4.36px;top:1338.00px;font-size:14.6px;line-height:22px;color:#a8a8ac;transform:scaleX(1.0248);">11/2/2021 7:26:23 PM - SPM Monitoring System application started</span>
<svg class="r" style="left:2540px;top:1343px" width="14" height="12"><path d="M2 3L7 8.6L12 3" stroke="#b4b4b8" stroke-width="2" fill="none"/></svg>
</div>
</body></html>
